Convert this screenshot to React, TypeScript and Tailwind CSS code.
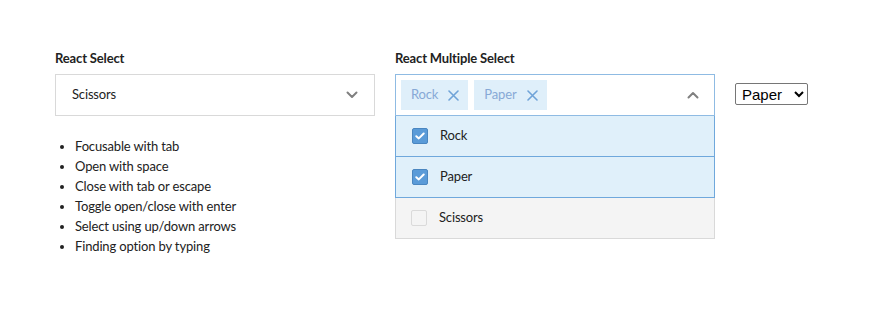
import React from 'react'

const font = { fontFamily: '"Source Sans Pro", Lato, "Noto Sans", sans-serif' }

function ChevronDown() {
  return (
    <svg width="12" height="8" viewBox="0 0 12 8" fill="none">
      <path d="M1.5 1.5 L6 6 L10.5 1.5" stroke="#808080" strokeWidth="2" strokeLinecap="round" strokeLinejoin="round" />
    </svg>
  )
}

function ChevronUp() {
  return (
    <svg width="12" height="8" viewBox="0 0 12 8" fill="none">
      <path d="M1.5 6.5 L6 2 L10.5 6.5" stroke="#808080" strokeWidth="2" strokeLinecap="round" strokeLinejoin="round" />
    </svg>
  )
}

function Cross() {
  return (
    <svg width="11" height="11" viewBox="0 0 11 11" fill="none">
      <path d="M1 1 L10 10 M10 1 L1 10" stroke="#6fa3d8" strokeWidth="1.6" strokeLinecap="round" />
    </svg>
  )
}

function Check({ checked }: { checked: boolean }) {
  if (!checked) {
    return <span className="w-4 h-4 rounded-[2px] border border-[#dadada] bg-[#f4f4f4]" />
  }
  return (
    <span className="w-4 h-4 rounded-[2px] bg-[#5a9bd8] border border-[#4a86c0] flex items-center justify-center">
      <svg width="10" height="8" viewBox="0 0 10 8" fill="none">
        <path d="M1.3 4.2 L3.8 6.4 L8.7 1.5" stroke="white" strokeWidth="2" strokeLinecap="round" strokeLinejoin="round" />
      </svg>
    </span>
  )
}

const tips = [
  'Focusable with tab',
  'Open with space',
  'Close with tab or escape',
  'Toggle open/close with enter',
  'Select using up/down arrows',
  'Finding option by typing',
]

const options = [
  { label: 'Rock', checked: true },
  { label: 'Paper', checked: true },
  { label: 'Scissors', checked: false },
]

export default function App() {
  return (
    <div className="w-[870px] h-[323px] bg-white text-[#222] text-[13px] tracking-[-0.15px]" style={font}>
      <div className="flex gap-5 pl-[55px] pt-[48px]">
        {/* single select */}
        <div className="w-[320px]">
          <div className="font-bold text-[#222] leading-5 mb-[6px]">React Select</div>
          <div className="h-[42px] border border-[#d9d9d9] flex items-center justify-between pl-4 pr-4">
            <span>Scissors</span>
            <ChevronDown />
          </div>
          <ul className="list-disc pl-5 mt-[20px] leading-5">
            {tips.map(t => (
              <li key={t}>{t}</li>
            ))}
          </ul>
        </div>

        {/* multi select */}
        <div className="w-[320px]">
          <div className="font-bold text-[#222] leading-5 mb-[6px]">React Multiple Select</div>
          <div className="h-[42px] border border-[#8fbbe3] flex items-center justify-between pl-[5px] pr-[15px]">
            <div className="flex gap-[6px]">
              {['Rock', 'Paper'].map(t => (
                <span key={t} className="h-[30px] bg-[#dfeffa] text-[#87a9d6] flex items-center gap-[10px] pl-[10px] pr-[9px]">
                  <span>{t}</span>
                  <Cross />
                </span>
              ))}
            </div>
            <ChevronUp />
          </div>
          <div className="border-x border-b border-[#d9d9d9]">
            {options.map(o => (
              <div
                key={o.label}
                className={
                  o.checked
                    ? 'h-[41px] flex items-center gap-3 bg-[#e0f0fa] border-x border-b border-[#6fa8dc] -mx-px pl-[16px]'
                    : 'h-[40px] flex items-center gap-3 pl-[15px] bg-[#f4f4f4]'
                }
              >
                <Check checked={o.checked} />
                <span>{o.label}</span>
              </div>
            ))}
          </div>
        </div>

        {/* native select */}
        <div className="pt-[35px]">
          <select
            defaultValue="Paper"
            className="h-[22px] w-[73px] border border-[#767676] rounded-[2px] text-[15px] tracking-normal px-[2px] bg-white text-black"
            style={{ fontFamily: '"Liberation Sans", Arial, sans-serif' }}
          >
            <option>Rock</option>
            <option>Paper</option>
            <option>Scissors</option>
          </select>
        </div>
      </div>
    </div>
  )
}
